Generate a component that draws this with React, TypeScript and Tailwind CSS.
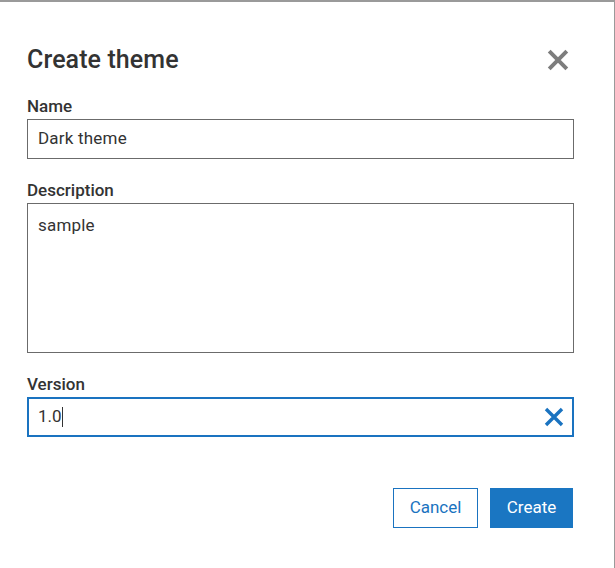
import React from 'react';

function CloseIcon({ color, size, stroke }: { color: string; size: number; stroke: number }) {
  return (
    <svg width={size} height={size} viewBox="0 0 20 20" fill="none">
      <path d="M2 2 L18 18 M18 2 L2 18" stroke={color} strokeWidth={stroke} strokeLinecap="butt" />
    </svg>
  );
}

export default function App() {
  return (
    <div className="w-[615px] h-[568px] bg-white border-t-2 border-r border-[#9a9a9a] pl-[27px] pr-[40px] pt-[44px] font-['Roboto','Liberation_Sans',sans-serif] text-[#333]">
      {/* Header */}
      <div className="flex items-center justify-between h-[28px]">
        <h1 className="text-[25px] leading-[28px] font-medium tracking-[0.1px] text-[#333]">Create theme</h1>
        <button className="mr-[5px] w-[22px] h-[22px] flex items-center justify-center">
          <CloseIcon color="#7d7d7d" size={22} stroke={3.6} />
        </button>
      </div>

      {/* Name */}
      <label className="block mt-[22px] mb-[3px] text-[17px] leading-[20px] font-medium">Name</label>
      <div className="h-[40px] border border-[#6b6b6b] px-[10px] flex items-center text-[17px] tracking-[0.2px]">Dark theme</div>

      {/* Description */}
      <label className="block mt-[21px] mb-[3px] text-[17px] leading-[20px] font-medium">Description</label>
      <div className="h-[150px] border border-[#6b6b6b] px-[10px] pt-[10px] text-[17px] leading-[22px] tracking-[0.2px]">sample</div>

      {/* Version */}
      <label className="block mt-[21px] mb-[3px] text-[17px] leading-[20px] font-medium">Version</label>
      <div className="h-[40px] border-2 border-[#1a73c0] pl-[9px] pr-[8px] flex items-center justify-between text-[17px]">
        <span className="flex items-center">
          1.0
          <span className="inline-block w-px h-[20px] bg-[#333]"></span>
        </span>
        <CloseIcon color="#1a73c0" size={20} stroke={3.4} />
      </div>

      {/* Actions */}
      <div className="mt-[51px] mr-px flex justify-end gap-3">
        <button className="w-[85px] h-[40px] border border-[#1a73c0] text-[#1a73c0] text-[17px] bg-white">Cancel</button>
        <button className="w-[83px] h-[40px] bg-[#1a76c2] text-white text-[17px]">Create</button>
      </div>
    </div>
  );
}
